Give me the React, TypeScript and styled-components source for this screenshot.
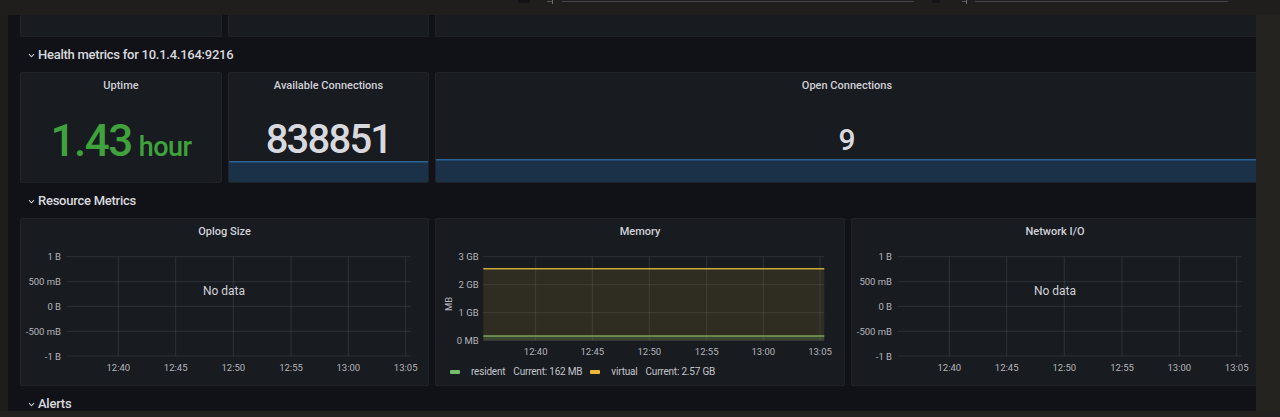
import React from "react";
import styled, { createGlobalStyle } from "styled-components";

const GlobalStyle = createGlobalStyle`
  html, body {
    margin: 0;
    padding: 0;
    background: #201f1d;
  }
  body {
    font-family: Roboto, "Liberation Sans", sans-serif;
    color: #ccccdc;
  }
`;

const AXIS = "#b4b5bb";
const GRID = "rgba(204, 204, 220, 0.12)";

// timeline x positions are the same for all three graphs
const TIMES = ["12:40", "12:45", "12:50", "12:55", "13:00", "13:05"];

interface YTick {
  label: string;
  y: number;
}

interface GraphProps {
  height: number;
  left: number;
  right: number;
  labelX: number;
  xs: number[];
  xLabelY: number;
  yTicks: YTick[];
  children?: React.ReactNode;
}

const TimeGraph: React.FC<GraphProps> = ({ height, left, right, labelX, xs, xLabelY, yTicks, children }) => {
  const top = yTicks[0].y;
  const bottom = yTicks[yTicks.length - 1].y;
  return (
    <GraphSvg height={height}>
      {yTicks.map((t) => (
        <g key={t.label}>
          <line x1={left} x2={right} y1={t.y} y2={t.y} stroke={GRID} />
          <text x={labelX} y={t.y + 1} textAnchor="end" dominantBaseline="middle">
            {t.label}
          </text>
        </g>
      ))}
      {xs.map((x, i) => (
        <g key={TIMES[i]}>
          <line x1={x} x2={x} y1={top} y2={bottom} stroke={GRID} />
          <text x={x} y={xLabelY + 1} textAnchor="middle" dominantBaseline="middle">
            {TIMES[i]}
          </text>
        </g>
      ))}
      {children}
    </GraphSvg>
  );
};

const NoDataGraph: React.FC = () => (
  <TimeGraph
    height={136}
    left={45.7}
    right={389.7}
    labelX={40}
    xs={[97.3, 154.7, 212.3, 270, 327.3, 384.7]}
    xLabelY={122.3}
    yTicks={[
      { label: "1 B", y: 11.7 },
      { label: "500 mB", y: 36.7 },
      { label: "0 B", y: 61.3 },
      { label: "-500 mB", y: 86.3 },
      { label: "-1 B", y: 111 },
    ]}
  >
    <NoData x={203} y={46.5} textAnchor="middle" dominantBaseline="middle">
      No data
    </NoData>
  </TimeGraph>
);

const MemoryGraph: React.FC = () => (
  <TimeGraph
    height={117}
    left={47.3}
    right={388.3}
    labelX={42.7}
    xs={[99.7, 156.3, 213.3, 270.7, 327.3, 384]}
    xLabelY={106}
    yTicks={[
      { label: "3 GB", y: 11.7 },
      { label: "2 GB", y: 39.7 },
      { label: "1 GB", y: 67.7 },
      { label: "0 MB", y: 95.3 },
    ]}
  >
    <text x={13.3} y={59} transform="rotate(-90 13.3 59)" textAnchor="middle" dominantBaseline="middle">
      MB
    </text>
    <rect x={47.3} y={23.7} width={341} height={71.6} fill="rgba(234, 184, 57, 0.11)" />
    <rect x={47.3} y={91} width={341} height={4.3} fill="rgba(115, 191, 105, 0.18)" />
    <line x1={47.3} x2={388.3} y1={23.7} y2={23.7} stroke="#c9a93c" strokeWidth={1.5} />
    <line x1={47.3} x2={388.3} y1={91} y2={91} stroke="#7ba05a" strokeWidth={1.5} />
  </TimeGraph>
);

const Sparkline: React.FC<{ height: number }> = ({ height }) => (
  <SparkSvg height={height} viewBox={`0 0 100 ${height}`} preserveAspectRatio="none">
    <rect x={0} y={0} width={100} height={height} fill="#1b3148" />
    <line x1={0} x2={100} y1={0.8} y2={0.8} stroke="#2c6394" strokeWidth={1.6} vectorEffect="non-scaling-stroke" />
  </SparkSvg>
);

const Chevron: React.FC = () => (
  <ChevronSvg width={7} height={5} viewBox="0 0 7 5">
    <path d="M1 1.2 L3.5 3.8 L6 1.2" fill="none" stroke="#c7c8d0" strokeWidth={1.1} />
  </ChevronSvg>
);

const App: React.FC = () => {
  return (
    <Frame>
      <GlobalStyle />
      <TopStrip>
        <svg width={1280} height={15}>
          <rect x={518} y={0} width={12} height={3} fill="#141417" />
          <line x1={547} x2={552} y1={1.5} y2={1.5} stroke="#55565c" />
          <line x1={552.5} x2={552.5} y1={0} y2={4} stroke="#6e6f76" />
          <line x1={562} x2={914} y1={1.5} y2={1.5} stroke="#44454c" />
          <rect x={932} y={0} width={8} height={3} fill="#141417" />
          <line x1={962} x2={966} y1={1.5} y2={1.5} stroke="#55565c" />
          <line x1={966.5} x2={966.5} y1={0} y2={4} stroke="#6e6f76" />
          <line x1={975} x2={1228} y1={1.5} y2={1.5} stroke="#44454c" />
        </svg>
      </TopStrip>
      <LeftEdge />
      <Dashboard>
        <Content>
          <PanelRow $cols="202px 201px 1fr" $h={22}>
            <Panel $cut />
            <Panel $cut />
            <Panel $cut />
          </PanelRow>

          <RowHeader>
            <Chevron />
            Health metrics for 10.1.4.164:9216
          </RowHeader>

          <PanelRow $cols="202px 201px 1fr" $h={111}>
            <Panel>
              <PanelTitle>Uptime</PanelTitle>
              <StatBody $pt={0}>
                <StatValue $color="#3fa23d" $size={44} $spacing={-1.5}>
                  1.43<Unit>hour</Unit>
                </StatValue>
              </StatBody>
            </Panel>
            <Panel>
              <PanelTitle>Available Connections</PanelTitle>
              <StatBody $pt={20}>
                <StatValue $color="#d8d9de" $size={40} $spacing={-1.8}>
                  838851
                </StatValue>
              </StatBody>
              <Sparkline height={21} />
            </Panel>
            <Panel>
              <PanelTitle>Open Connections</PanelTitle>
              <StatBody $pt={22}>
                <StatValue $color="#d8d9de" $size={30} $spacing={0}>
                  9
                </StatValue>
              </StatBody>
              <Sparkline height={23} />
            </Panel>
          </PanelRow>

          <RowHeader>
            <Chevron />
            Resource Metrics
          </RowHeader>

          <PanelRow $cols="409px 410px 1fr" $h={168}>
            <Panel>
              <PanelTitle>Oplog Size</PanelTitle>
              <NoDataGraph />
            </Panel>
            <Panel>
              <PanelTitle>Memory</PanelTitle>
              <MemoryGraph />
              <Legend>
                <LegendItem>
                  <LegendDash $color="#73bf69" />
                  <LegendLabel>resident</LegendLabel>
                  <LegendLabel>Current: 162 MB</LegendLabel>
                </LegendItem>
                <LegendItem>
                  <LegendDash $color="#eab839" />
                  <LegendLabel>virtual</LegendLabel>
                  <LegendLabel>Current: 2.57 GB</LegendLabel>
                </LegendItem>
              </Legend>
            </Panel>
            <Panel>
              <PanelTitle>Network I/O</PanelTitle>
              <NoDataGraph />
            </Panel>
          </PanelRow>

          <RowHeader>
            <Chevron />
            Alerts
          </RowHeader>
        </Content>
      </Dashboard>
      <RightEdge />
      <BottomStrip />
    </Frame>
  );
};

const Frame = styled.div`
  width: 1280px;
  height: 417px;
  overflow: hidden;
  display: grid;
  grid-template-rows: 15px 396px 6px;
  grid-template-columns: 8px 1248px 24px;
  background: #201f1d;
`;

const TopStrip = styled.div`
  grid-column: 1 / 4;
  background: #1f1e1c;
  overflow: hidden;

  svg {
    display: block;
  }
`;

const LeftEdge = styled.div`
  background: #1e1d1b;
`;

const RightEdge = styled.div`
  background: #252320;
`;

const BottomStrip = styled.div`
  grid-column: 1 / 4;
  background: #23211f;
`;

const Dashboard = styled.div`
  background: #111217;
  overflow: hidden;
  padding-left: 12px;
`;

const Content = styled.div`
  width: 1239px;
  display: flex;
  flex-direction: column;
`;

const PanelRow = styled.div<{ $cols: string; $h: number }>`
  display: grid;
  grid-template-columns: ${(p) => p.$cols};
  column-gap: 6px;
  height: ${(p) => p.$h}px;
  flex-shrink: 0;
`;

const Panel = styled.div<{ $cut?: boolean }>`
  background: #181b1f;
  border: 1px solid #202328;
  border-radius: 2px;
  display: flex;
  flex-direction: column;
  overflow: hidden;
  min-width: 0;
  ${(p) => p.$cut && "border-top: none; border-radius: 0 0 2px 2px;"}
`;

const RowHeader = styled.div`
  height: 35px;
  flex-shrink: 0;
  display: flex;
  align-items: center;
  gap: 3px;
  padding-left: 8px;
  font-size: 13px;
  font-weight: 500;
  letter-spacing: -0.25px;
  color: #d8d9de;
`;

const ChevronSvg = styled.svg`
  margin-top: 2px;
`;

const PanelTitle = styled.div`
  height: 26px;
  padding-bottom: 2px;
  box-sizing: border-box;
  flex-shrink: 0;
  display: flex;
  align-items: center;
  justify-content: center;
  font-size: 11px;
  font-weight: 500;
  color: #d0d1d8;
`;

const StatBody = styled.div<{ $pt: number }>`
  flex: 1;
  min-height: 0;
  display: flex;
  align-items: center;
  justify-content: center;
  padding-top: ${(p) => p.$pt}px;
`;

const StatValue = styled.div<{ $color: string; $size: number; $spacing: number }>`
  color: ${(p) => p.$color};
  font-size: ${(p) => p.$size}px;
  letter-spacing: ${(p) => p.$spacing}px;
  font-weight: 500;
  line-height: 1;
  white-space: nowrap;
`;

const Unit = styled.span`
  font-size: 27px;
  letter-spacing: -0.5px;
  margin-left: 7px;
`;

const SparkSvg = styled.svg`
  display: block;
  width: 100%;
  flex-shrink: 0;
`;

const GraphSvg = styled.svg`
  display: block;
  width: 100%;
  flex-shrink: 0;
  font-family: Roboto, "Liberation Sans", sans-serif;
  font-size: 9.5px;
  fill: ${AXIS};
`;

const NoData = styled.text`
  font-size: 12px;
  fill: #d0d1d8;
`;

const Legend = styled.div`
  height: 19px;
  display: flex;
  align-items: center;
  gap: 8px;
  padding-left: 14px;
  font-size: 10px;
  color: #c4c5cc;
`;

const LegendItem = styled.div`
  display: flex;
  align-items: center;
  gap: 8px;
`;

const LegendDash = styled.span<{ $color: string }>`
  width: 10px;
  height: 4px;
  border-radius: 1px;
  margin-right: 3px;
  background: ${(p) => p.$color};
`;

const LegendLabel = styled.span`
  letter-spacing: -0.2px;
  white-space: nowrap;
`;

export default App;
